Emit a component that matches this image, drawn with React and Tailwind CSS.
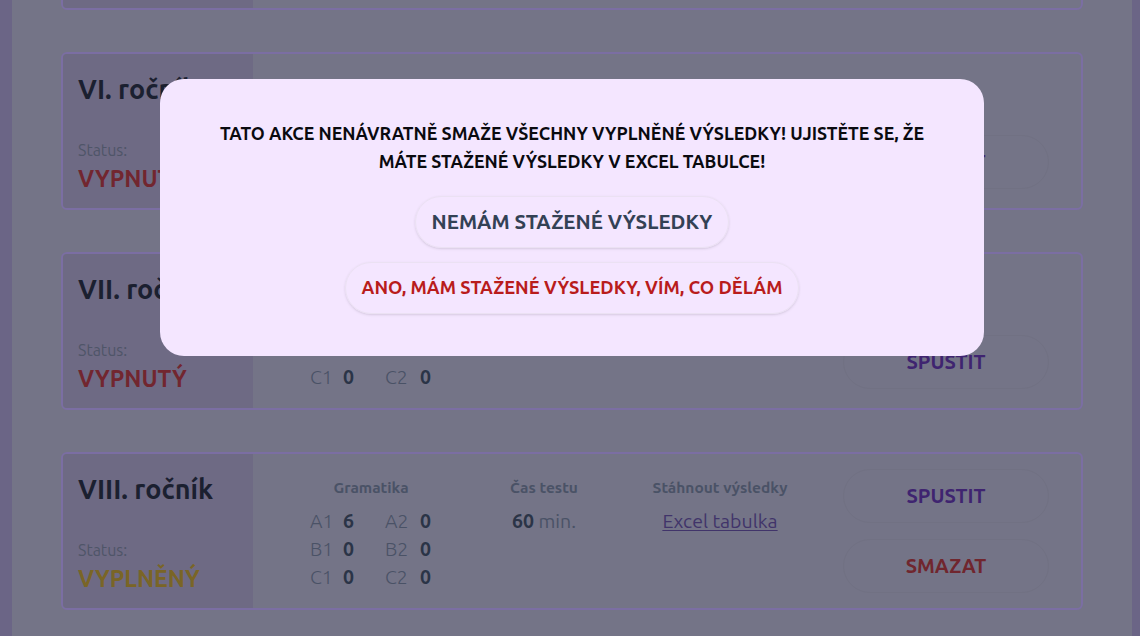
import React from "react";

const grades = [
  { name: "V. ročník", status: "VYPNUTÝ", counts: [0, 0, 0, 0, 0, 0], filled: false },
  { name: "VI. ročník", status: "VYPNUTÝ", counts: [0, 0, 0, 0, 0, 0], filled: false },
  { name: "VII. ročník", status: "VYPNUTÝ", counts: [0, 0, 0, 0, 0, 0], filled: false },
  { name: "VIII. ročník", status: "VYPLNĚNÝ", counts: [6, 0, 0, 0, 0, 0], filled: true },
];

const levels = ["A1", "A2", "B1", "B2", "C1", "C2"];

const GradeCard = ({ grade }) => {
  return (
    <div className="flex h-[158px] rounded-md border-2 border-[#7b6ea3] bg-[#747487]">
      <div className="w-[190px] shrink-0 rounded-l-[4px] bg-[#6e6a84] px-[15px] pt-[16px]">
        <h2 className="text-[27px] font-bold leading-[38px] text-[#1b2030]">
          {grade.name}
        </h2>
        <p className="mt-[30px] text-base leading-6 text-[#4f5568]">Status:</p>
        <p
          className={`mt-[1px] text-[23px] font-semibold leading-8 ${
            grade.filled ? "text-[#7a6526]" : "text-[#72262f]"
          }`}
        >
          {grade.status}
        </p>
      </div>

      <div className="ml-[47px] w-[142px] pt-[22px]">
        <h3 className="text-center text-[15.5px] font-semibold leading-6 text-[#4a5266]">
          Gramatika
        </h3>
        <div className="mt-[7px] ml-[10px] grid grid-cols-[33px_42px_35px_30px] text-[19.5px] leading-7">
          {levels.map((lvl, i) => (
            <React.Fragment key={lvl}>
              <span className="font-light text-[#4a5266]">{lvl}</span>
              <span className="font-bold text-[#2b3447]">{grade.counts[i]}</span>
            </React.Fragment>
          ))}
        </div>
      </div>

      <div className="ml-[38px] w-[128px] pt-[22px] text-center">
        <h3 className="text-[15.5px] font-semibold leading-6 text-[#4a5266]">
          Čas testu
        </h3>
        <p className="mt-[7px] text-[19.5px] leading-7 text-[#4a5266]">
          <span className="font-bold text-[#2b3447]">60</span> min.
        </p>
      </div>

      <div className="ml-[32px] w-[160px] pt-[22px] text-center">
        <h3 className="text-[15.5px] font-semibold leading-6 text-[#4a5266]">
          Stáhnout výsledky
        </h3>
        {grade.filled && (
          <a
            href="#"
            className="mt-[7px] inline-block text-[19.5px] leading-7 text-[#41346a] underline underline-offset-2"
          >
            Excel tabulka
          </a>
        )}
      </div>

      <div className="ml-auto mr-[32px] flex w-[206px] flex-col gap-4 pt-[15px]">
        <button
          className={`h-[54px] rounded-full border border-[#717183] text-xl font-bold text-[#3f2470] ${
            grade.filled ? "" : "mt-[66px]"
          }`}
        >
          SPUSTIT
        </button>
        {grade.filled && (
          <button className="h-[54px] rounded-full border border-[#717183] text-xl font-bold text-[#70262e]">
            SMAZAT
          </button>
        )}
      </div>
    </div>
  );
};

const App = () => {
  return (
    <div className="relative h-[636px] overflow-hidden border-l-[12px] border-r-[8px] border-[#6b6586] bg-[#747487] font-['Ubuntu','Noto_Sans',sans-serif]">
      <div className="-mt-[148px] flex flex-col gap-[42px] px-[49px]">
        {grades.map((g) => (
          <GradeCard key={g.name} grade={g} />
        ))}
      </div>

      <div className="absolute inset-0 flex justify-center pt-[79px]">
        <div className="h-[277px] w-[824px] rounded-3xl bg-[#f4e6ff] px-8 pt-10 text-center">
          <p className="text-[17.8px] font-bold leading-7 text-[#0a0a0f]">
            TATO AKCE NENÁVRATNĚ SMAŽE VŠECHNY VYPLNĚNÉ VÝSLEDKY! UJISTĚTE SE, ŽE
            <br />
            MÁTE STAŽENÉ VÝSLEDKY V EXCEL TABULCE!
          </p>
          <div className="mt-[21px] flex flex-col items-center gap-[14px]">
            <button className="h-[52px] rounded-full border border-[#ebe1f3] px-4 text-[20.4px] font-bold text-[#334155] shadow-sm">
              NEMÁM STAŽENÉ VÝSLEDKY
            </button>
            <button className="h-[52px] rounded-full border border-[#ebe1f3] px-4 text-[18.3px] font-bold text-[#b91c1c] shadow-sm">
              ANO, MÁM STAŽENÉ VÝSLEDKY, VÍM, CO DĚLÁM
            </button>
          </div>
        </div>
      </div>
    </div>
  );
};

export default App;
